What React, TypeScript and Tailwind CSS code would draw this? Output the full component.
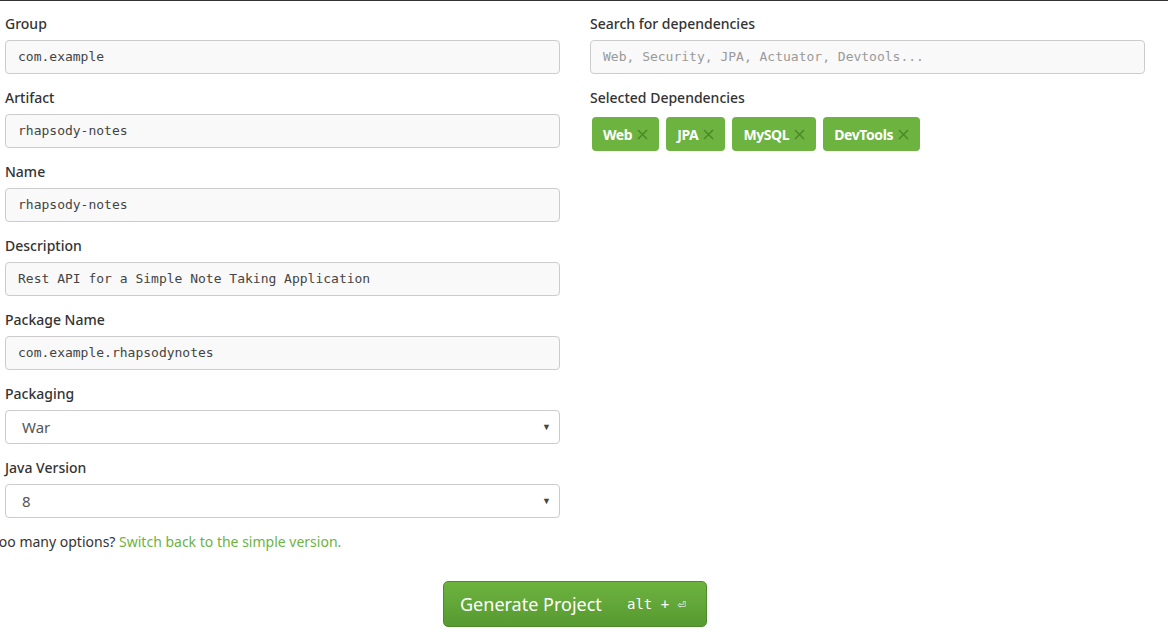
import React from "react";

const sans = "font-['Noto_Sans','Open_Sans',sans-serif]";
const mono = "font-['DejaVu_Sans_Mono','Liberation_Mono',monospace]";

function Label({ children }: { children: React.ReactNode }) {
  return (
    <div className={`h-5 leading-5 text-[14px] font-medium text-[#333] ${sans}`}>
      {children}
    </div>
  );
}

function TextField({ label, value, placeholder }: { label: string; value?: string; placeholder?: string }) {
  return (
    <div className="mb-[14px]">
      <Label>{label}</Label>
      <div
        className={`mt-[6px] flex h-[34px] items-center rounded border border-[#ccc] bg-[#f9f9f9] px-3 text-[13px] ${mono} ${
          value ? "text-[#444]" : "text-[#999]"
        }`}
      >
        {value ?? placeholder}
      </div>
    </div>
  );
}

function SelectField({ label, value }: { label: string; value: string }) {
  return (
    <div className="mb-[14px]">
      <Label>{label}</Label>
      <div
        className={`mt-[6px] flex h-[34px] items-center justify-between rounded border border-[#ccc] bg-white pl-4 pr-2 text-[15px] text-[#555] ${sans}`}
      >
        <span>{value}</span>
        <span className="text-[9px] text-[#444]">▼</span>
      </div>
    </div>
  );
}

function Tag({ name }: { name: string }) {
  return (
    <div
      className={`flex h-[34px] items-center gap-1 rounded-[4px] bg-[#6db33f] px-[11px] text-[14px] font-bold tracking-[-0.4px] text-white ${sans}`}
    >
      <span>{name}</span>
      <svg width="11" height="11" viewBox="0 0 11 11" className="ml-[1px]">
        <path d="M1 1 L10 10 M10 1 L1 10" stroke="#4c8a28" strokeWidth="1.6" />
      </svg>
    </div>
  );
}

export default function App() {
  return (
    <div className="h-[632px] w-[1168px] overflow-hidden bg-white">
      <div className="h-px bg-[#333]" />
      <div className="w-[1145px] pl-[5px] pt-[13px]">
        <div className="flex gap-[30px]">
          <div className="w-[555px] shrink-0">
            <TextField label="Group" value="com.example" />
            <TextField label="Artifact" value="rhapsody-notes" />
            <TextField label="Name" value="rhapsody-notes" />
            <TextField label="Description" value="Rest API for a Simple Note Taking Application" />
            <TextField label="Package Name" value="com.example.rhapsodynotes" />
            <SelectField label="Packaging" value="War" />
            <SelectField label="Java Version" value="8" />
            <div className={`-ml-[13px] h-5 leading-5 text-[14px] text-[#333] ${sans}`}>
              Too many options? <span className="text-[#6db33f]">Switch back to the simple version.</span>
            </div>
          </div>
          <div className="w-[555px] shrink-0">
            <TextField label="Search for dependencies" placeholder="Web, Security, JPA, Actuator, Devtools..." />
            <Label>Selected Dependencies</Label>
            <div className="mt-[9px] flex gap-[7px] pl-[2px]">
              {["Web", "JPA", "MySQL", "DevTools"].map((d) => (
                <Tag key={d} name={d} />
              ))}
            </div>
          </div>
        </div>
        <div className="mt-[29px] flex justify-center">
          <div className="flex h-[46px] w-[264px] items-center justify-between rounded-[5px] border border-[#4e8a2a] bg-gradient-to-b from-[#6db33f] to-[#569a31] pl-[16px] pr-[20px] text-white">
            <span className={`text-[18px] ${sans}`}>Generate Project</span>
            <span className={`text-[14px] ${mono}`}>alt + ⏎</span>
          </div>
        </div>
      </div>
    </div>
  );
}
